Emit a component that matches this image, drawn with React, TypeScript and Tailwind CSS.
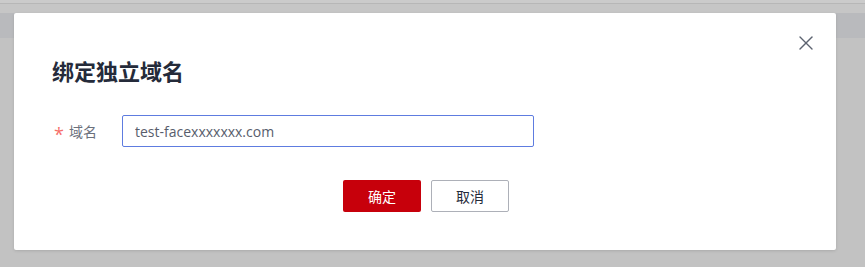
import { X } from "lucide-react";

export default function App() {
  return (
    <div
      className="relative h-[267px] w-[865px] overflow-hidden bg-[#c2c2c2]"
      style={{ fontFamily: '"Open Sans", "Noto Sans CJK SC", sans-serif' }}
    >
      {/* page behind the mask */}
      <div className="h-[3px] bg-[#cbcbcb]" />
      <div className="h-px bg-[#b7b7b7]" />
      <div className="h-[9px] bg-[#c6c6c6]" />
      <div className="h-[25px] bg-[#b9babd]" />

      {/* dialog */}
      <div className="absolute left-[14px] top-[13px] flex h-[237px] w-[822px] flex-col rounded-[2px] bg-white px-[38px] pt-[42px] shadow-[0_1px_3px_rgba(0,0,0,0.12)]">
        <button className="absolute right-[18px] top-[18px] text-[#5c6370]">
          <X size={24} strokeWidth={1.4} />
        </button>

        <h2 className="text-[22px] font-bold leading-[32px] text-[#252b3a]">绑定独立域名</h2>

        <div className="mt-[28px] flex items-center">
          <label className="flex w-[70px] items-center pl-[2px] text-[14px] text-[#6b707c]">
            <span className="mr-[5px] translate-y-[3px] text-[18px] leading-none text-[#f66f6a]">*</span>
            域名
          </label>
          <input
            readOnly
            value="test-facexxxxxxx.com"
            className="h-[32px] w-[412px] rounded-[2px] border border-[#5e7ce0] px-[12px] text-[14px] text-[#575d6c] outline-none"
          />
        </div>

        <div className="mt-[33px] flex justify-center gap-[10px] pl-[2px]">
          <button className="h-[32px] w-[78px] rounded-[2px] bg-[#c7000b] text-[14px] text-white">确定</button>
          <button className="h-[32px] w-[78px] rounded-[2px] border border-[#adb0b8] bg-white text-[14px] text-[#252b3a]">
            取消
          </button>
        </div>
      </div>
    </div>
  );
}
